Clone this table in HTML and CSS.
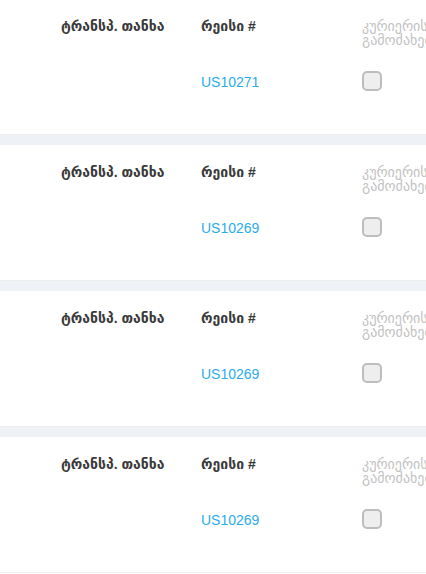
FILE: index.html
```html
<!DOCTYPE html>
<html lang="ka">
<head>
    <meta charset="UTF-8">
    <title>რეისები</title>
    <link rel="stylesheet" href="styles.css">
</head>
<body>
    <div class="list">
        <div class="card">
            <div class="label">ტრანსპ. თანხა</div>
            <div class="label">რეისი #</div>
            <div class="muted">კურიერის გამოძახება</div>
            <div class="value"></div>
            <div class="value"><a class="trip" href="#">US10271</a></div>
            <div class="value"><span class="check"></span></div>
        </div>
        <div class="card">
            <div class="label">ტრანსპ. თანხა</div>
            <div class="label">რეისი #</div>
            <div class="muted">კურიერის გამოძახება</div>
            <div class="value"></div>
            <div class="value"><a class="trip" href="#">US10269</a></div>
            <div class="value"><span class="check"></span></div>
        </div>
        <div class="card">
            <div class="label">ტრანსპ. თანხა</div>
            <div class="label">რეისი #</div>
            <div class="muted">კურიერის გამოძახება</div>
            <div class="value"></div>
            <div class="value"><a class="trip" href="#">US10269</a></div>
            <div class="value"><span class="check"></span></div>
        </div>
        <div class="card">
            <div class="label">ტრანსპ. თანხა</div>
            <div class="label">რეისი #</div>
            <div class="muted">კურიერის გამოძახება</div>
            <div class="value"></div>
            <div class="value"><a class="trip" href="#">US10269</a></div>
            <div class="value"><span class="check"></span></div>
        </div>
    </div>
</body>
</html>
```

FILE: styles.css
```css
* { box-sizing: border-box; margin: 0; padding: 0; }
body {
    font-family: 'Liberation Sans', 'DejaVu Sans', sans-serif;
    background-color: #FFFFFF;
    color: #333333;
    overflow: hidden;
}
.list {
    margin-top: -1px;
    background-color: #EEF2F7;
    display: flex;
    flex-direction: column;
    gap: 10px;
}
.card {
    background-color: #FFFFFF;
    height: 136px;
    border-bottom: 1px solid #EDEDED;
    padding: 19px 0 0 61px;
    display: grid;
    grid-template-columns: 140px 161px 110px;
    grid-template-rows: 29px 20px;
    row-gap: 24px;
    align-items: start;
}
.label {
    font-size: 14px;
    font-weight: bold;
    line-height: 17px;
    color: #3A3A3A;
}
.muted {
    font-size: 14px;
    line-height: 14px;
    padding-top: 1px;
    color: #C2C2C2;
    width: 100px;
}
.value { height: 20px; display: flex; align-items: center; }
.trip {
    font-size: 14px;
    color: #2BACEB;
    text-decoration: none;
    padding-top: 1px;
}
.check {
    display: block;
    width: 20px;
    height: 20px;
    border: 2px solid #BDBDBD;
    border-radius: 5px;
    background-color: #EEEEEE;
}
```
